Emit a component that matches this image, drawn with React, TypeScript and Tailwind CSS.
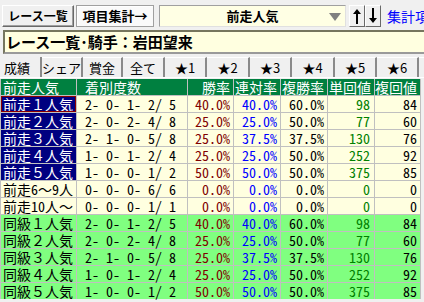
import React from "react";

type Row = {
  name: string;
  rec: string;
  win: string;
  ren: string;
  fuku: string;
  tan: string;
  fk: string;
  kind: "navy" | "plain" | "green";
};

const base = [
  ["2- 0- 1- 2/ 5", "40.0%", "40.0%", "60.0%", "98", "84"],
  ["2- 0- 2- 4/ 8", "25.0%", "25.0%", "50.0%", "77", "60"],
  ["2- 1- 0- 5/ 8", "25.0%", "37.5%", "37.5%", "130", "76"],
  ["1- 0- 1- 2/ 4", "25.0%", "25.0%", "50.0%", "252", "92"],
  ["1- 0- 0- 1/ 2", "50.0%", "50.0%", "50.0%", "375", "85"],
];
const digits = ["１", "２", "３", "４", "５"];

const rows: Row[] = [
  ...base.map((b, i) => ({
    name: `前走${digits[i]}人気`,
    rec: b[0],
    win: b[1],
    ren: b[2],
    fuku: b[3],
    tan: b[4],
    fk: b[5],
    kind: "navy" as const,
  })),
  { name: "前走6～9人", rec: "0- 0- 0- 6/ 6", win: "0.0%", ren: "0.0%", fuku: "0.0%", tan: "0", fk: "0", kind: "plain" },
  { name: "前走10人～", rec: "0- 0- 0- 1/ 1", win: "0.0%", ren: "0.0%", fuku: "0.0%", tan: "0", fk: "0", kind: "plain" },
  ...base.map((b, i) => ({
    name: `同級${digits[i]}人気`,
    rec: b[0],
    win: b[1],
    ren: b[2],
    fuku: b[3],
    tan: b[4],
    fk: b[5],
    kind: "green" as const,
  })),
];

const tabs: [string, number][] = [
  ["成績", 42],
  ["シェア", 41],
  ["賞金", 40],
  ["全て", 42],
  ["★1", 42],
  ["★2", 43],
  ["★3", 42],
  ["★4", 43],
  ["★5", 42],
  ["★6", 42],
];

function UpArrow() {
  return (
    <svg width="10" height="16" viewBox="0 0 10 16">
      <path d="M5 1 L1 6 H4 V16 H6 V6 H9 Z" fill="#000" />
    </svg>
  );
}
function DownArrow() {
  return (
    <svg width="10" height="16" viewBox="0 0 10 16">
      <path d="M5 15 L1 10 H4 V0 H6 V10 H9 Z" fill="#000" />
    </svg>
  );
}

export default function App() {
  return (
    <div className="w-[424px] h-[302px] overflow-hidden bg-[#f0f0f0] font-['Noto_Sans_CJK_JP',sans-serif] text-black">
      {/* top bar */}
      <div className="flex items-center pt-[5px] h-[27px] overflow-hidden">
        <div className="shrink-0 ml-[2px] w-[72px] h-[22px] flex items-center justify-center text-[12px] font-bold whitespace-nowrap border border-t-white border-l-white border-r-[#696969] border-b-[#696969] bg-[#f0f0f0] shadow-[inset_-1px_-1px_0_#a0a0a0]">
          レース一覧
        </div>
        <div className="shrink-0 ml-[2px] w-[78px] h-[22px] flex items-center justify-center text-[13px] font-bold whitespace-nowrap border border-[#a0a0a0] bg-[#fafafa] shadow-[inset_1px_1px_0_#fff]">
          項目集計→
        </div>
        <div className="shrink-0 relative ml-[5px] w-[187px] h-[22px] flex items-center justify-center text-[13px] font-bold bg-[#ffffe4] border border-t-[#a0a0a0] border-l-[#a0a0a0] border-r-[#e0e0e0] border-b-[#e0e0e0]">
          前走人気
          <svg className="absolute right-[4px] top-[7px]" width="12" height="8" viewBox="0 0 12 8">
            <path d="M0 0 H12 L6 8 Z" fill="#808080" />
          </svg>
        </div>
        <div className="shrink-0 ml-[3px] w-[16px] h-[22px] flex items-center justify-center bg-[#f0f0f0] border border-t-white border-l-white border-r-[#696969] border-b-[#696969]">
          <UpArrow />
        </div>
        <div className="shrink-0 w-[16px] h-[22px] flex items-center justify-center bg-[#f0f0f0] border border-t-white border-l-white border-r-[#696969] border-b-[#696969]">
          <DownArrow />
        </div>
        <div className="shrink-0 ml-[6px] text-[14px] text-[#0000ff] whitespace-nowrap">集計項目</div>
      </div>

      {/* title */}
      <div className="mt-[3px] ml-[3px] h-[24px] flex items-center bg-[#ffffe0] border-t-2 border-l-2 border-t-[#76765e] border-l-[#76765e] border-b-2 border-b-[#9a9a9a] pl-[1px] text-[15px] font-bold whitespace-nowrap">
        レース一覧･騎手：岩田望来
      </div>

      {/* tabs */}
      <div className="mt-[3px] h-[21px] flex border-b border-white">
        {tabs.map(([t, w], i) => (
          <div
            key={t}
            style={{ width: w }}
            className={
              "shrink-0 h-full flex items-center text-[13px] leading-none whitespace-nowrap " +
              (i === 0
                ? "pl-[4px] border-r-2 border-r-[#8a8a8a]"
                : "justify-center border-t border-t-white border-r-2 border-r-[#8a8a8a]")
            }
          >
            {t}
          </div>
        ))}
        <div className="flex-1 border-t border-t-white" />
      </div>

      {/* table */}
      <div className="mt-[1px] w-[421px] grid grid-cols-[75px_110px_45px_46px_46px_46px_45px] gap-px bg-[#c0c0c0] px-px font-['Noto_Sans_Mono_CJK_JP','Noto_Sans_CJK_JP',monospace] text-[14px] leading-[16px]">
        {["前走人気", "着別度数", "勝率", "連対率", "複勝率", "単回値", "複回値"].map((h, i) => (
          <div
            key={h}
            className={
              "h-[16px] bg-[#008040] text-white whitespace-nowrap overflow-hidden " +
              (i === 0 ? "pl-[2px]" : i === 1 ? "pl-[8px]" : "text-right pr-[3px]")
            }
          >
            {h}
          </div>
        ))}
        {rows.map((r, idx) => {
          const bg = r.kind === "green" ? "bg-[#80ff80]" : "bg-[#ffffe0]";
          const nameCls =
            r.kind === "navy"
              ? "bg-[#000080] text-white"
              : r.kind === "green"
              ? "bg-[#80ff80]"
              : "bg-[#ffffe0]";
          return (
            <React.Fragment key={idx}>
              <div
                className={
                  "h-[16px] whitespace-nowrap overflow-hidden " +
                  nameCls +
                  (idx === 0 ? " border border-[#8b0000] pl-px leading-[14px]" : " pl-[2px]")
                }
              >
                {r.name}
              </div>
              <div className={"h-[16px] whitespace-pre pl-[8px] " + bg}>{r.rec}</div>
              <div className={"h-[16px] text-right pr-[3px] text-[#800000] " + bg}>{r.win}</div>
              <div className={"h-[16px] text-right pr-[3px] text-[#0000ff] " + bg}>{r.ren}</div>
              <div className={"h-[16px] text-right pr-[3px] " + bg}>{r.fuku}</div>
              <div className={"h-[16px] text-right pr-[4px] text-[#008000] " + bg}>{r.tan}</div>
              <div className={"h-[16px] text-right pr-[3px] " + bg}>{r.fk}</div>
            </React.Fragment>
          );
        })}
      </div>
    </div>
  );
}
